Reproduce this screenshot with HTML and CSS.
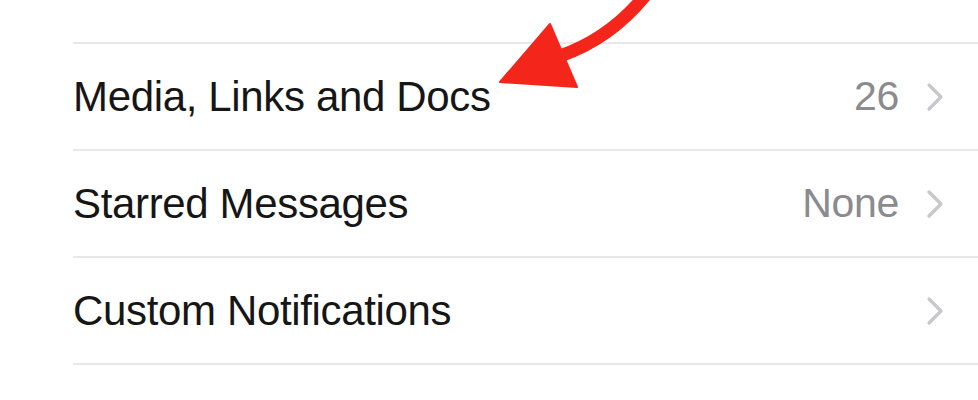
FILE: index.html
```html
<!DOCTYPE html>
<html>
<head>
<meta charset="utf-8">
<link rel="stylesheet" href="styles.css">
</head>
<body>
<div class="screen">
  <ul class="list">
    <li class="row row-partial"></li>
    <li class="row">
      <span class="label">Media, Links and Docs</span>
      <span class="detail"><span class="value">26</span><svg class="chev" viewBox="0 0 20 30" width="20" height="30"><polyline points="4,3 16,15 4,27" fill="none" stroke="#c7c7cc" stroke-width="3.2" stroke-linecap="round" stroke-linejoin="round"/></svg></span>
    </li>
    <li class="row">
      <span class="label">Starred Messages</span>
      <span class="detail"><span class="value">None</span><svg class="chev" viewBox="0 0 20 30" width="20" height="30"><polyline points="4,3 16,15 4,27" fill="none" stroke="#c7c7cc" stroke-width="3.2" stroke-linecap="round" stroke-linejoin="round"/></svg></span>
    </li>
    <li class="row">
      <span class="label">Custom Notifications</span>
      <span class="detail"><svg class="chev" viewBox="0 0 20 30" width="20" height="30"><polyline points="4,3 16,15 4,27" fill="none" stroke="#c7c7cc" stroke-width="3.2" stroke-linecap="round" stroke-linejoin="round"/></svg></span>
    </li>
    <li class="row">
      <span class="label">Chat Search</span>
    </li>
  </ul>
  <svg class="annotation" viewBox="0 0 978 400" width="978" height="400">
    <path d="M648 -8 Q 612 38 560 56" fill="none" stroke="#f4261b" stroke-width="13" stroke-linecap="butt"/>
    <polygon points="500,82 550,24 577,87" fill="#f4261b" stroke="#f4261b" stroke-width="2" stroke-linejoin="round"/>
  </svg>
</div>
</body>
</html>
```
FILE: styles.css
```css
html, body {
  margin: 0;
  padding: 0;
  background: #ffffff;
}
.screen {
  position: relative;
  width: 978px;
  height: 400px;
  overflow: hidden;
  background: #ffffff;
  font-family: "Liberation Sans", Arial, sans-serif;
}
.list {
  list-style: none;
  margin: 0;
  padding: 0 0 0 73px;
}
.row {
  height: 105px;
  border-bottom: 2px solid #e8e8ea;
  display: flex;
  align-items: center;
  justify-content: space-between;
  padding-right: 33px;
}
.row-partial {
  height: 42px;
}
.label {
  font-size: 42px;
  color: #161616;
  letter-spacing: -0.35px;
  white-space: nowrap;
}
.detail {
  display: flex;
  align-items: center;
  gap: 26px;
}
.value {
  font-size: 41px;
  color: #8a8a8f;
  letter-spacing: -0.3px;
}
.chev {
  display: block;
}
.annotation {
  position: absolute;
  left: 0;
  top: 0;
}
```
